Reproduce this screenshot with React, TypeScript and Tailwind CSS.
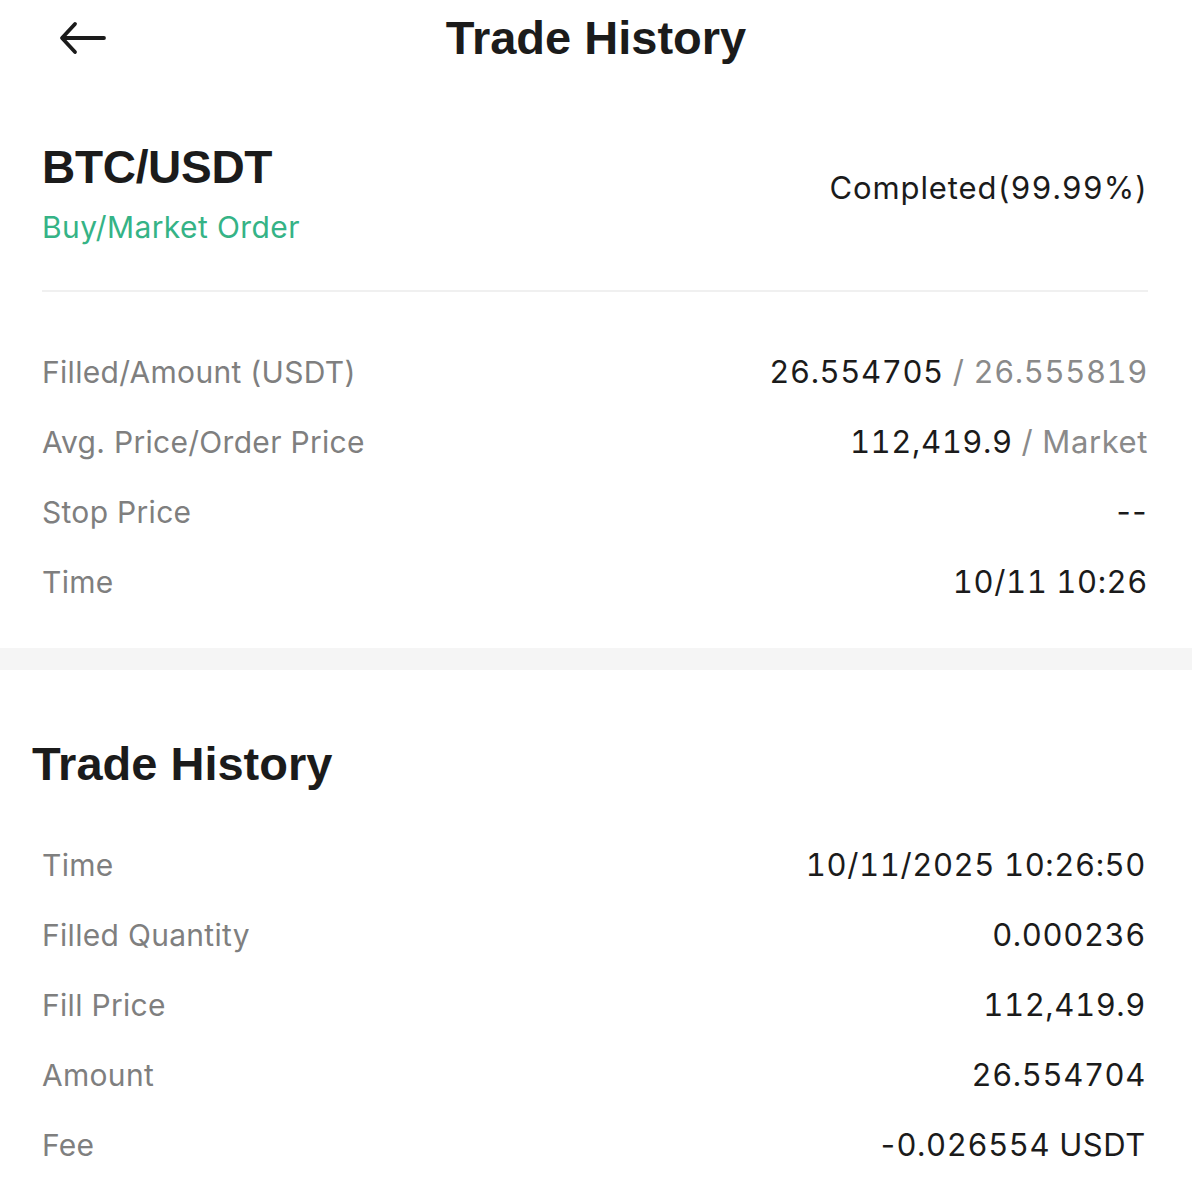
import React from "react";

const orderRows = [
  { label: "Filled/Amount (USDT)", value: "26.554705", sub: "26.555819" },
  { label: "Avg. Price/Order Price", value: "112,419.9", sub: "Market" },
  { label: "Stop Price", value: "--" },
  { label: "Time", value: "10/11 10:26" },
];

const fillRows = [
  { label: "Time", value: "10/11/2025 10:26:50" },
  { label: "Filled Quantity", value: "0.000236" },
  { label: "Fill Price", value: "112,419.9" },
  { label: "Amount", value: "26.554704" },
  { label: "Fee", value: "-0.026554 USDT" },
];

const heading = { fontFamily: '"Liberation Sans", Arial, sans-serif' };
const body = { fontFamily: 'Inter, "Liberation Sans", sans-serif' };

type Row = { label: string; value: string; sub?: string };

const Num: React.FC<{ text: string }> = ({ text }) => (
  <>
    {text.split(/(-+)/).map((part, i) =>
      part.startsWith("-") ? (
        <span key={i} className="normal-nums tracking-[1.5px]">
          {part}
        </span>
      ) : (
        <span key={i}>{part}</span>
      )
    )}
  </>
);

const InfoRow: React.FC<{ row: Row }> = ({ row }) => (
  <div className="h-[70px] flex items-center justify-between">
    <span className="text-[30px] tracking-[0.3px] text-[#7f7f7f]">{row.label}</span>
    <span className="text-[31px] tabular-nums tracking-[0.6px] text-[#1b1b1b]">
      <Num text={row.value} />
      {row.sub && <span className="text-[#8a8a8a]"> / {row.sub}</span>}
    </span>
  </div>
);

export default function App() {
  return (
    <div className="w-[1192px] min-h-[1200px] bg-white" style={body}>
      {/* Top bar */}
      <div className="relative h-[76px] flex items-center justify-center">
        <button className="absolute left-[58px] top-[18px] w-[50px] h-[40px] flex items-center justify-center text-[#1b1b1b]">
          <svg width="48" height="34" viewBox="0 0 48 34" fill="none" stroke="currentColor" strokeWidth="3.8" strokeLinecap="round" strokeLinejoin="round">
            <path d="M45 17H4" />
            <path d="M16 3L3 17l13 14" />
          </svg>
        </button>
        <h1 className="text-[47px] leading-[48px] font-bold text-[#1b1b1b]" style={heading}>
          Trade History
        </h1>
      </div>

      {/* Order summary */}
      <div className="pl-[42px] pr-[44px]">
        <div className="pt-[68px] flex justify-between items-start">
          <div className="flex flex-col">
            <span className="text-[46px] leading-[46px] font-bold text-[#1b1b1b] tracking-[-0.3px]" style={heading}>
              BTC/USDT
            </span>
            <span className="mt-[21px] text-[30px] leading-[32px] tracking-[0.4px] text-[#35b386]">Buy/Market Order</span>
          </div>
          <span className="mt-[27px] text-[31px] leading-[34px] tabular-nums tracking-[0.9px] text-[#1b1b1b]">
            Completed(99.99%)
          </span>
        </div>
        <div className="mt-[47px] h-[2px] bg-[#f0f0f0]" />
        <div className="pt-[45px] pb-[31px]">
          {orderRows.map((r) => (
            <InfoRow key={r.label} row={r} />
          ))}
        </div>
      </div>

      <div className="h-[22px] bg-[#f5f5f5]" />

      {/* Fills */}
      <div className="pl-[32px] pt-[70px]">
        <h2 className="text-[47px] leading-[48px] font-bold text-[#1b1b1b]" style={heading}>
          Trade History
        </h2>
      </div>
      <div className="pl-[42px] pr-[46px] mt-[42px]">
        {fillRows.map((r) => (
          <InfoRow key={r.label} row={r} />
        ))}
      </div>
    </div>
  );
}
